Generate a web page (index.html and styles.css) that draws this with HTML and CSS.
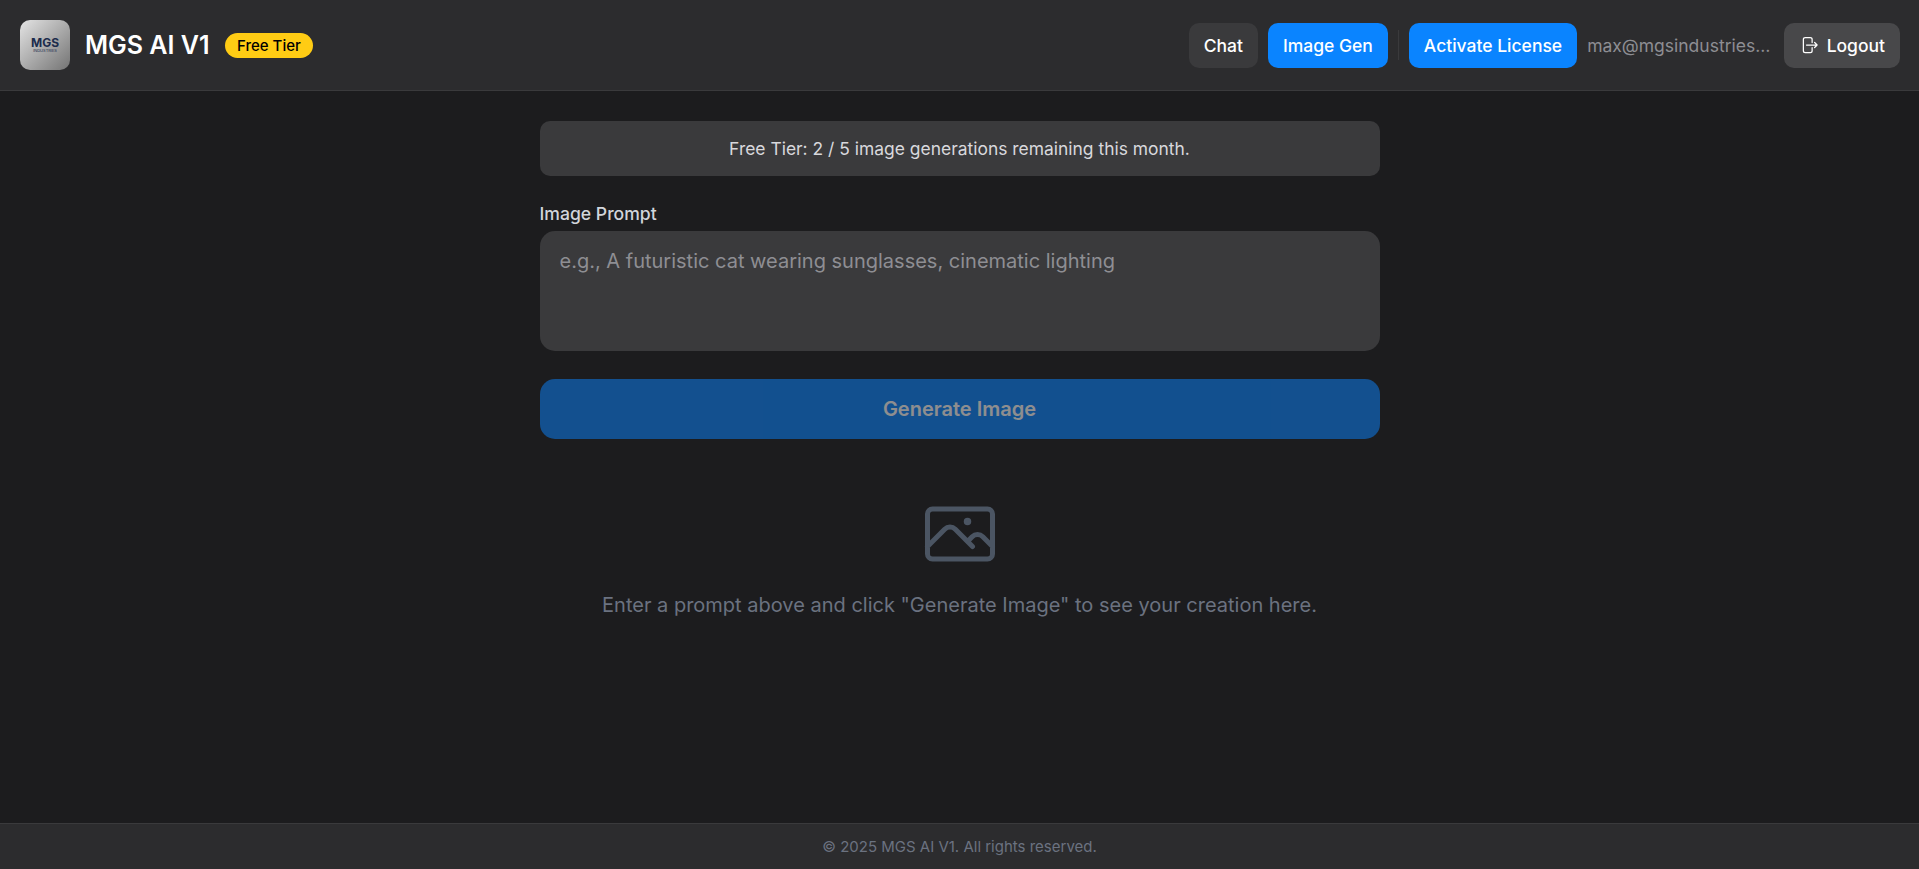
FILE: index.html
```html
<!DOCTYPE html>
<html lang="en">
<head>
    <meta charset="UTF-8">
    <meta name="viewport" content="width=device-width, initial-scale=1.0">
    <title>MGS AI V1</title>
    <link rel="stylesheet" href="styles.css">
</head>
<body>
    <header class="top-bar">
        <div class="brand">
            <div class="logo">
                <span class="logo-name">MGS</span>
                <span class="logo-sub">INDUSTRIES</span>
            </div>
            <span class="brand-title">MGS AI V1</span>
            <span class="tier-badge">Free Tier</span>
        </div>
        <nav class="nav">
            <button class="nav-button">Chat</button>
            <button class="nav-button nav-active">Image Gen</button>
            <span class="nav-divider"></span>
            <button class="nav-button nav-active">Activate License</button>
            <span class="user-email">max@mgsindustries.com</span>
            <button class="nav-button logout-button">
                <svg class="logout-icon" viewBox="0 0 24 24" fill="none" stroke="currentColor" stroke-width="1.5" stroke-linecap="round" stroke-linejoin="round">
                    <path d="M15.75 9V5.25A2.25 2.25 0 0 0 13.5 3h-6a2.25 2.25 0 0 0-2.25 2.25v13.5A2.25 2.25 0 0 0 7.5 21h6a2.25 2.25 0 0 0 2.25-2.25V15m3 0 3-3m0 0-3-3m3 3H9"/>
                </svg>
                Logout
            </button>
        </nav>
    </header>

    <main class="content">
        <div class="quota-banner">Free Tier: 2 / 5 image generations remaining this month.</div>

        <label class="prompt-label" for="prompt">Image Prompt</label>
        <textarea class="prompt-input" id="prompt" placeholder="e.g., A futuristic cat wearing sunglasses, cinematic lighting"></textarea>

        <button class="generate-button" disabled>Generate Image</button>

        <div class="empty-state">
            <svg class="empty-icon" viewBox="0 0 24 24" fill="none" stroke="currentColor" stroke-width="1.5" stroke-linecap="round" stroke-linejoin="round">
                <path d="m2.25 15.75 5.159-5.159a2.25 2.25 0 0 1 3.182 0l5.159 5.159m-1.5-1.5 1.409-1.409a2.25 2.25 0 0 1 3.182 0l2.909 2.909m-18 3.75h16.5a1.5 1.5 0 0 0 1.5-1.5V6a1.5 1.5 0 0 0-1.5-1.5H3.75A1.5 1.5 0 0 0 2.25 6v12a1.5 1.5 0 0 0 1.5 1.5Zm10.5-11.25h.008v.008h-.008V8.25Zm.375 0a.375.375 0 1 1-.75 0 .375.375 0 0 1 .75 0Z"/>
            </svg>
            <p class="empty-text">Enter a prompt above and click "Generate Image" to see your creation here.</p>
        </div>
    </main>

    <footer class="page-footer">© 2025 MGS AI V1. All rights reserved.</footer>
</body>
</html>
```

FILE: styles.css
```css
* {
    box-sizing: border-box;
}
body {
    font-family: Inter, "Noto Sans", sans-serif;
    margin: 0;
    height: 100vh;
    display: flex;
    flex-direction: column;
    background-color: #1c1c1e;
    color: #fff;
}
.top-bar {
    display: flex;
    align-items: center;
    justify-content: space-between;
    height: 91px;
    padding: 0 19px 0 20px;
    background: #2c2c2e;
    border-bottom: 1px solid #3a3a3c;
}
.brand {
    display: flex;
    align-items: center;
}
.logo {
    width: 50px;
    height: 50px;
    border-radius: 10px;
    margin-right: 15px;
    display: flex;
    flex-direction: column;
    align-items: center;
    justify-content: center;
    background: linear-gradient(135deg, #e4e4e4, #747474);
    color: #1c2c4c;
}
.logo-name {
    font-size: 12px;
    line-height: 11px;
    font-weight: 700;
}
.logo-sub {
    font-size: 4px;
    line-height: 5px;
}
.brand-title {
    font-size: 25px;
    font-weight: 600;
    margin-right: 15px;
}
.tier-badge {
    background: #ffcc14;
    color: #000;
    font-size: 15px;
    font-weight: 500;
    line-height: 25px;
    padding: 0 12.5px;
    border-radius: 13px;
}
.nav {
    display: flex;
    align-items: center;
}
.nav-button {
    display: flex;
    align-items: center;
    height: 45px;
    padding: 0 15px;
    margin-left: 10px;
    border: none;
    border-radius: 10px;
    background: #3a3a3c;
    color: #fff;
    font-family: inherit;
    font-size: 17.5px;
    font-weight: 500;
    cursor: pointer;
}
.nav-active {
    background: #0a84ff;
}
.nav-divider {
    width: 1px;
    height: 30px;
    margin-left: 10px;
    background: #3a3a3c;
}
.user-email {
    width: 185px;
    margin-left: 10px;
    overflow: hidden;
    white-space: nowrap;
    text-overflow: ellipsis;
    font-size: 17.5px;
    color: #8e8e93;
}
.logout-button {
    margin-left: 12px;
    background: #48484a;
}
.logout-icon {
    width: 20px;
    height: 20px;
    margin-right: 7.5px;
}
.content {
    flex: 1;
    width: 840px;
    margin: 0 auto;
    padding-top: 30px;
    display: flex;
    flex-direction: column;
}
.quota-banner {
    height: 55px;
    line-height: 55px;
    text-align: center;
    font-size: 17.45px;
    background: #3a3a3c;
    color: #d8d8dc;
    border-radius: 10px;
}
.prompt-label {
    margin-top: 27px;
    margin-bottom: 6px;
    font-size: 17.6px;
    line-height: 22px;
    font-weight: 500;
    color: #d1d5db;
}
.prompt-input {
    height: 120px;
    padding: 15px 20px;
    border: none;
    border-radius: 15px;
    resize: none;
    background: #3a3a3c;
    color: #fff;
    font-family: inherit;
    font-size: 20px;
    line-height: 30px;
}
.prompt-input::placeholder {
    color: #8e8e93;
}
.generate-button {
    height: 60px;
    margin-top: 28px;
    border: none;
    border-radius: 15px;
    background: #0a84ff;
    color: #fff;
    font-family: inherit;
    font-size: 20px;
    font-weight: 600;
    opacity: 0.5;
}
.empty-state {
    margin-top: 55px;
    display: flex;
    flex-direction: column;
    align-items: center;
}
.empty-icon {
    width: 80px;
    height: 80px;
    color: #4b5563;
}
.empty-text {
    margin: 16px 0 0;
    font-size: 20px;
    line-height: 30px;
    color: #6b7280;
}
.page-footer {
    height: 46px;
    line-height: 45px;
    text-align: center;
    font-size: 15px;
    color: #6b7280;
    background: #2c2c2e;
    border-top: 1px solid #3a3a3c;
}
```
